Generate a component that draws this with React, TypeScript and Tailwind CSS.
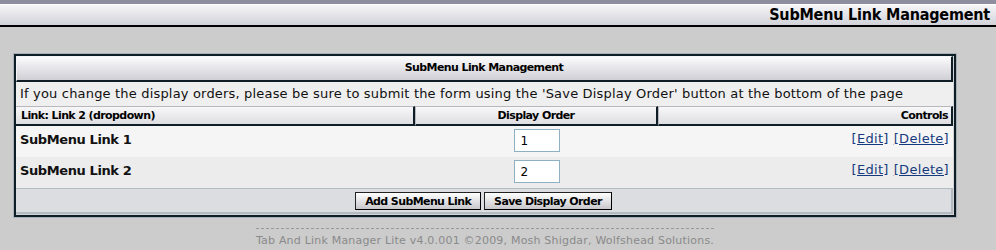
const verdana = "font-['DejaVu_Sans',Verdana,sans-serif]";

function OrderRow({ name, order, bg }: { name: string; order: string; bg: string }) {
  return (
    <div className={`flex h-[31px] ${bg}`}>
      <div className="w-[399px] pl-[4px] pt-[4px] text-[13px] font-bold tracking-[-0.4px] text-[#111]">{name}</div>
      <div className="w-[243px] flex justify-center pt-[3px]">
        <input
          defaultValue={order}
          className="w-[46px] h-[23px] border border-[#8fb0c4] bg-white px-[6px] text-[12px] text-black outline-none"
        />
      </div>
      <div className="flex-1 flex justify-end gap-[5px] pr-[4px] pt-[3px] text-[13px] tracking-[0.3px] text-[#163a7e]">
        <a href="#" className="underline">[Edit]</a>
        <a href="#" className="underline">[Delete]</a>
      </div>
    </div>
  );
}

export default function App() {
  return (
    <div className={`w-[996px] h-[250px] bg-[#cccccc] ${verdana}`}>
      <div className="h-[4px] bg-[#8e8e9f]" />
      <div className="h-[23px] border-t border-white border-b-2 border-b-black bg-gradient-to-b from-[#f6f6f8] to-[#d2d2da] flex items-center justify-end pr-[6px]">
        <h1 className="font-['DejaVu_Sans_Condensed','DejaVu_Sans',sans-serif] font-bold text-[16px] leading-none text-black tracking-[-0.2px] [font-stretch:condensed]">
          SubMenu Link Management
        </h1>
      </div>

      <div className="mt-[26px] ml-[13px] w-[944px] border border-[#a9b1b8]">
        <div className="border-2 border-[#0f1e26] bg-[#d4d4d6] pr-px pb-px">
          <div className="h-[26px] border-t border-l border-[#f4f4f6] border-b-2 border-r-2 border-b-[#0f1e26] border-r-[#0f1e26] bg-gradient-to-b from-[#fbfbfc] to-[#cfcfd6] flex items-center justify-center text-[11px] font-bold tracking-[-0.6px] text-black">
            SubMenu Link Management
          </div>
          <div className="h-[24px] bg-[#efefef] pl-[4px] pt-[2px] text-[13px] tracking-[0.18px] text-[#111] whitespace-nowrap">
            If you change the display orders, please be sure to submit the form using the 'Save Display Order' button at the bottom of the page
          </div>
          <div className="flex h-[20px] text-[11px] font-bold tracking-[-0.6px] text-black">
            <div className="w-[399px] border-t border-[#b8b8bc] border-r-2 border-r-[#0f1e26] border-b-2 border-b-[#0f1e26] bg-gradient-to-b from-[#f8f8fa] to-[#dedee2] pl-[5px] leading-[17px]">
              Link: Link 2 (dropdown)
            </div>
            <div className="w-[243px] border-t border-l border-[#b8b8bc] border-r-2 border-r-[#0f1e26] border-b-2 border-b-[#0f1e26] bg-gradient-to-b from-[#f8f8fa] to-[#dedee2] text-center leading-[17px]">
              Display Order
            </div>
            <div className="flex-1 border-t border-l border-[#b8b8bc] border-r-2 border-r-[#0f1e26] border-b-2 border-b-[#0f1e26] bg-gradient-to-b from-[#f8f8fa] to-[#dedee2] text-right pr-[3px] leading-[17px]">
              Controls
            </div>
          </div>
          <OrderRow name="SubMenu Link 1" order="1" bg="bg-[#f5f5f5]" />
          <OrderRow name="SubMenu Link 2" order="2" bg="bg-[#ececec]" />
          <div className="h-[26px] border-t border-[#b2bac2] border-r-2 border-b-2 border-[#0f1e26] border-t-[#b2bac2] bg-[#dcdde0] flex justify-center gap-[3px] pt-[3px]">
            <button className="h-[18px] px-[9px] border border-[#222] border-r-[#000] border-b-[#000] bg-gradient-to-b from-white to-[#c8c8cc] text-[11px] font-bold tracking-[-0.6px] text-black leading-none">
              Add SubMenu Link
            </button>
            <button className="h-[18px] px-[9px] border border-[#222] border-r-[#000] border-b-[#000] bg-gradient-to-b from-white to-[#c8c8cc] text-[11px] font-bold tracking-[-0.6px] text-black leading-none">
              Save Display Order
            </button>
          </div>
        </div>
      </div>

      <div className="w-[944px] ml-[13px] flex justify-center mt-[10px]">
        <div className="border-t border-dashed border-[#999] pt-[6px] text-[11px] leading-none tracking-[0.2px] text-[#8a8a8a] whitespace-nowrap">
          Tab And Link Manager Lite v4.0.001 ©2009, Mosh Shigdar, Wolfshead Solutions.
        </div>
      </div>
    </div>
  );
}
